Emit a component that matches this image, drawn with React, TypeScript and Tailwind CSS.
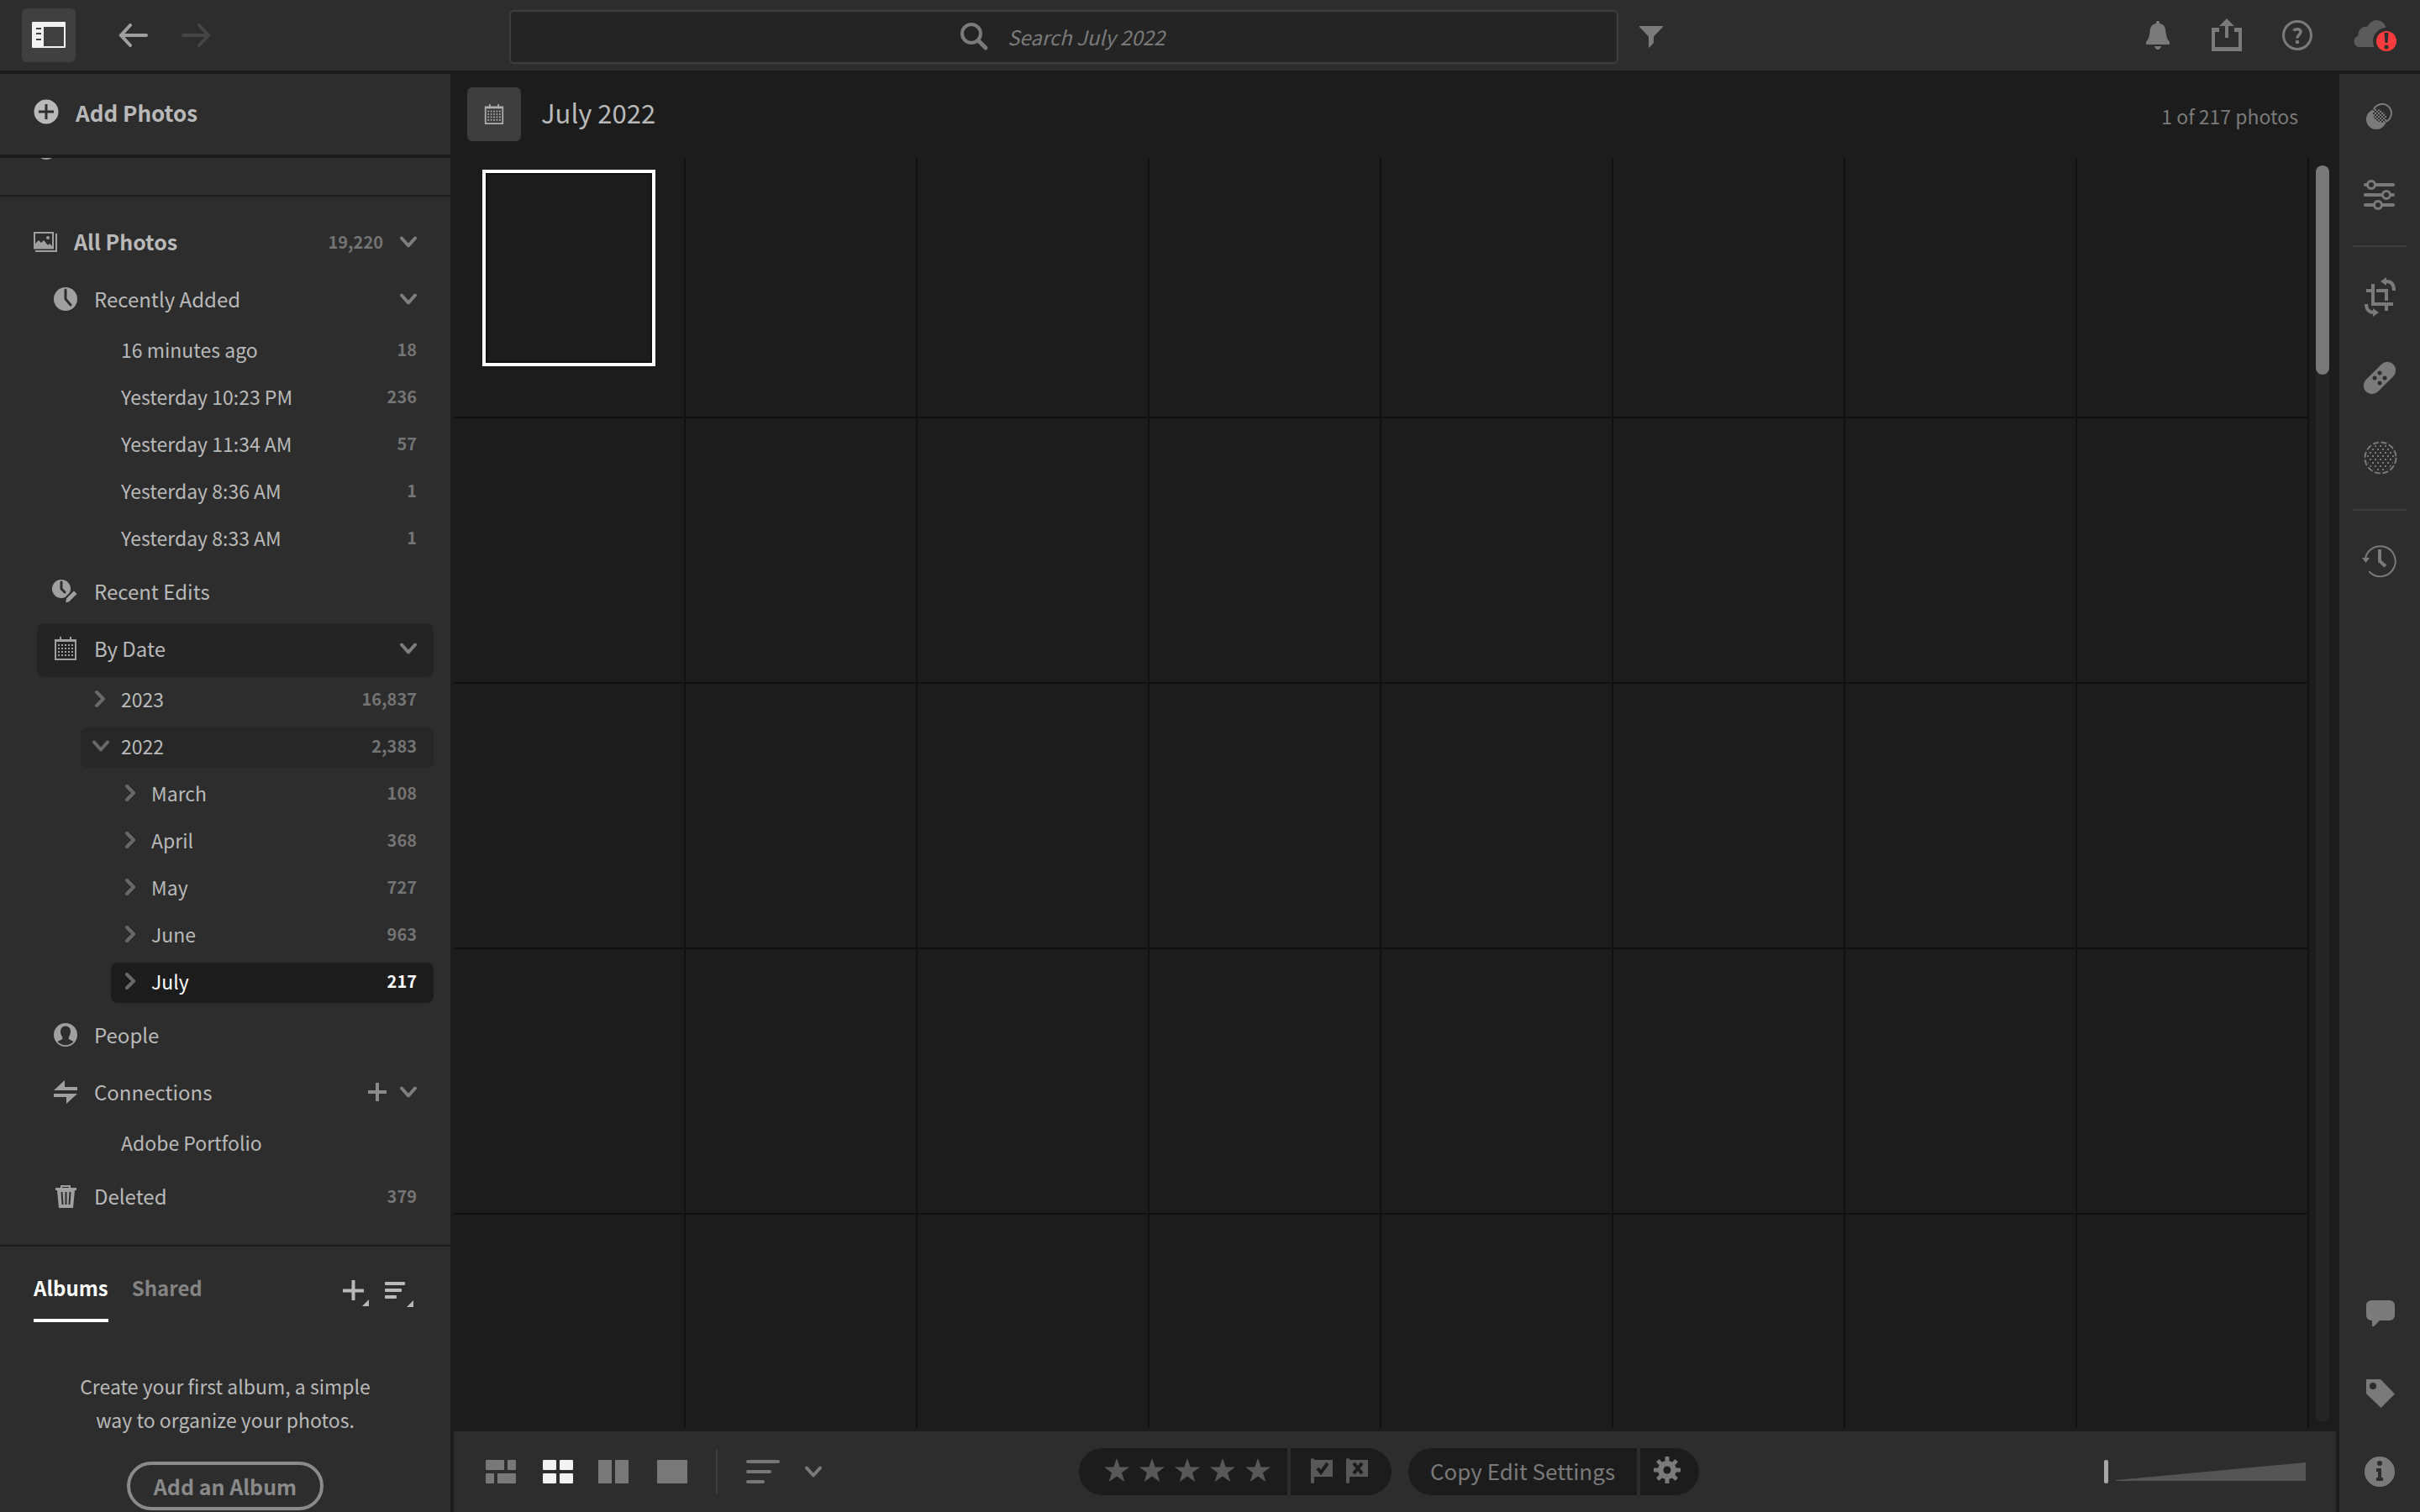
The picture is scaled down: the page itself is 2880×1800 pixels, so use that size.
import { useState } from "react";
import type { ReactNode } from "react";
import clsx from "clsx";

type IconProps = { w: number; h: number; className?: string; children: ReactNode };

function Icon({ w, h, className, children }: IconProps) {
  return (
    <svg
      width={w}
      height={h}
      viewBox={`0 0 ${w} ${h}`}
      fill="currentColor"
      aria-hidden="true"
      className={clsx("shrink-0", className)}
    >
      {children}
    </svg>
  );
}

function ChevronDown({ className }: { className?: string }) {
  return (
    <Icon w={20} h={14} className={className}>
      <path
        d="M2 2.5l8 9 8-9"
        fill="none"
        stroke="currentColor"
        strokeWidth="4"
        strokeLinecap="round"
        strokeLinejoin="round"
      />
    </Icon>
  );
}

function ChevronRight() {
  return (
    <Icon w={14} h={20}>
      <path
        d="M3 2l8 8-8 8"
        fill="none"
        stroke="currentColor"
        strokeWidth="4"
        strokeLinecap="round"
        strokeLinejoin="round"
      />
    </Icon>
  );
}

function CalendarIcon({ size }: { size: 24 | 28 }) {
  return (
    <svg width={size} height={size} viewBox="0 0 28 28" fill="currentColor" aria-hidden="true" className="shrink-0">
      <path d="M1 3h26v25H1zM3 6v20h22V6z" fillRule="evenodd" />
      <path d="M7 0h2v6H7zM19 0h2v6h-2z" />
      {[10, 14, 18, 22].map((y) =>
        [5, 9, 13, 17, 21].map((x) => <rect key={`${x}-${y}`} x={x} y={y - 1} width="2" height="2" />)
      )}
    </svg>
  );
}

function ClockIcon() {
  return (
    <Icon w={28} h={28}>
      <circle cx="14" cy="14" r="14" />
      <path d="M14 3v11l6 7" fill="none" stroke="#2d2d2d" strokeWidth="3" strokeLinecap="round" />
    </Icon>
  );
}

function EditsIcon() {
  return (
    <Icon w={30} h={28} className="-ml-0.5">
      <circle cx="11" cy="11" r="11" />
      <path d="M11 3v8l4 4" fill="none" stroke="#2d2d2d" strokeWidth="3" strokeLinecap="round" />
      <path
        d="M26 12l5 5-10 10-6 2 1-7z"
        stroke="#2d2d2d"
        strokeWidth="2"
        strokeLinejoin="round"
      />
    </Icon>
  );
}

function PhotosIcon() {
  return (
    <Icon w={28} h={24}>
      <path d="M0 0h24v20.500H0zM2 2v16h20V2z" fillRule="evenodd" />
      <path d="M2 19v-5l4-4 3 3 3-3 5 6 2-2 3 3v2z" />
      <circle cx="17" cy="7" r="2" />
      <path d="M26 2h2v22H2v-2h24z" />
    </Icon>
  );
}

function PersonIcon() {
  return (
    <Icon w={28} h={28}>
      <circle cx="14" cy="14" r="14" />
      <path
        d="M14 3.500c4 0 6 3 6 6.500 0 3-1.200 4.800-2.200 6.500v2.500l5.700 3c-2.500 2.700-5.500 4.200-9.500 4.200s-7-1.500-9.500-4.200l5.700-3v-2.500C9.200 14.800 8 13 8 10c0-3.500 2-6.500 6-6.500z"
        fill="#2d2d2d"
      />
    </Icon>
  );
}

function ConnectionsIcon() {
  return (
    <Icon w={28} h={28}>
      <path d="M0 12L13 0v8h15v4zM28 16L15 28v-8H0v-4z" />
    </Icon>
  );
}

function TrashIcon() {
  return (
    <Icon w={28} h={28}>
      <path d="M8 1h12v4h-2V3h-8v2H8z" />
      <path d="M2 4h25v3h-2l-2 21H6L4 7H2z" />
      <path d="M9.500 9l1 15M14.500 9v15M19.500 9l-1 15" stroke="#2d2d2d" strokeWidth="2" />
    </Icon>
  );
}

function PlusIcon() {
  return (
    <Icon w={22} h={22}>
      <path d="M9 0h4v9h9v4h-9v9H9v-9H0V9h9z" />
    </Icon>
  );
}

function StarIcon() {
  return (
    <Icon w={30} h={28}>
      <path d="M15 0l3.700 10.500H30l-9 6.700L24.300 28 15 21.500 5.700 28 9 17.200 0 10.500h11.300z" />
    </Icon>
  );
}

function FlagIcon({ rejected }: { rejected?: boolean }) {
  return (
    <Icon w={26} h={30}>
      <path d="M0 1.500a2 1.500 0 014 0V2h22v20H4v6.500a2 1.500 0 01-4 0z" />
      <path
        d={rejected ? "M9 6l10 12M19 6L9 18" : "M8 12l4 5 8-11"}
        fill="none"
        stroke="#1c1c1c"
        strokeWidth="4"
      />
    </Icon>
  );
}

function GearIcon() {
  return (
    <Icon w={32} h={32}>
      {[0, 45, 90, 135].map((deg) => (
        <rect key={deg} x="13.500" y="0" width="5" height="32" rx="1" transform={`rotate(${deg} 16 16)`} />
      ))}
      <circle cx="16" cy="16" r="11" />
      <circle cx="16" cy="16" r="4.500" fill="#1c1c1c" />
    </Icon>
  );
}

const recentlyAdded = [
  { label: "16 minutes ago", count: "18" },
  { label: "Yesterday 10:23 PM", count: "236" },
  { label: "Yesterday 11:34 AM", count: "57" },
  { label: "Yesterday 8:36 AM", count: "1" },
  { label: "Yesterday 8:33 AM", count: "1" },
];

const months = [
  { label: "March", count: "108" },
  { label: "April", count: "368" },
  { label: "May", count: "727" },
  { label: "June", count: "963" },
  { label: "July", count: "217" },
];

function Count({ children, selected }: { children: ReactNode; selected?: boolean }) {
  return (
    <span className={clsx("ml-auto text-xl font-bold", selected ? "text-white" : "text-[#747474]")}>
      {children}
    </span>
  );
}

type SectionProps = {
  icon: ReactNode;
  label: string;
  count?: string;
  open?: boolean;
  active?: boolean;
  action?: ReactNode;
};

function SectionRow({ icon, label, count, open, active, action }: SectionProps) {
  return (
    <div
      className={clsx(
        "ml-11 mr-5 flex h-16 items-center rounded-lg pb-1 pr-5",
        active && "bg-[#242424]"
      )}
    >
      <button type="button" className="flex flex-1 items-center text-left text-2xl text-[#b9b9b9]">
        <span className="flex w-[68px] justify-start pl-5 text-[#a0a0a0]">{icon}</span>
        {label}
      </button>
      {action}
      {count && <Count>{count}</Count>}
      {open && (
        <button type="button" aria-label={`Collapse ${label}`} className="ml-4 text-[#7e7e7e]">
          <ChevronDown />
        </button>
      )}
    </div>
  );
}

function SubRow({ label, count }: { label: string; count?: string }) {
  return (
    <button type="button" className="ml-24 mr-5 flex h-12 items-center rounded-lg pb-1 pl-12 pr-5">
      <span>{label}</span>
      {count && <Count>{count}</Count>}
    </button>
  );
}

function Sidebar() {
  const [month, setMonth] = useState("July");

  return (
    <aside className="flex w-[536px] shrink-0 flex-col overflow-hidden bg-[#2d2d2d]">
      <div className="flex h-24 shrink-0 items-center pb-1.5">
        <button type="button" className="flex items-center gap-5 pl-10 text-[26px] font-bold text-[#b9b9b9]">
          <Icon w={30} h={30}>
            <circle cx="15" cy="15" r="14.500" />
            <path d="M15 6v18M6 15h18" stroke="#2d2d2d" strokeWidth="3" />
          </Icon>
          Add Photos
        </button>
      </div>

      {/* bottom edge of the scrolled-away item */}
      <div className="h-[50px] shrink-0 border-y-2 border-t-4 border-[#1c1c1c] pl-12 text-[#a0a0a0]">
        <Icon w={14} h={2}>
          <path d="M0 0h14q-7 4-14 0z" />
        </Icon>
      </div>

      <nav className="flex flex-col gap-1 py-6 text-[23px] text-[#b9b9b9]">
        <div className="mr-5 flex h-16 items-center pb-1 pl-10 pr-5">
          <button type="button" className="flex flex-1 items-center gap-5 text-left text-[25px] font-bold">
            <span className="text-[#a0a0a0]">
              <PhotosIcon />
            </span>
            All Photos
          </button>
          <Count>19,220</Count>
          <button type="button" aria-label="Collapse All Photos" className="ml-5 text-[#7e7e7e]">
            <ChevronDown />
          </button>
        </div>

        <SectionRow icon={<ClockIcon />} label="Recently Added" open />
        <div className="flex flex-col gap-2 pb-1">
          {recentlyAdded.map((item) => (
            <SubRow key={item.label} {...item} />
          ))}
        </div>

        <SectionRow icon={<EditsIcon />} label="Recent Edits" />

        <SectionRow icon={<CalendarIcon size={28} />} label="By Date" open active />
        <div className="flex flex-col gap-2 pb-1">
          <button type="button" className="ml-24 mr-5 flex h-12 items-center rounded-lg pb-1 pl-4 pr-5">
            <span className="w-8 text-[#686868]">
              <ChevronRight />
            </span>
            <span>2023</span>
            <Count>16,837</Count>
          </button>
          <button type="button" className="ml-24 mr-5 flex h-12 items-center rounded-lg bg-[#272727] pb-1 pl-[14px] pr-5">
            <span className="w-[34px] text-[#686868]">
              <ChevronDown />
            </span>
            <span>2022</span>
            <Count>2,383</Count>
          </button>
          {months.map(({ label, count }) => (
            <button
              key={label}
              type="button"
              onClick={() => setMonth(label)}
              className={clsx(
                "ml-[132px] mr-5 flex h-12 items-center rounded-lg pb-1 pl-4 pr-5",
                month === label && "bg-[#1c1c1c] text-white"
              )}
            >
              <span className="w-8 text-[#686868]">
                <ChevronRight />
              </span>
              <span>{label}</span>
              <Count selected={month === label}>{count}</Count>
            </button>
          ))}
        </div>

        <SectionRow icon={<PersonIcon />} label="People" />
        <SectionRow
          icon={<ConnectionsIcon />}
          label="Connections"
          open
          action={
            <button type="button" aria-label="Add connection" className="text-[#8a8a8a]">
              <PlusIcon />
            </button>
          }
        />
        <div className="flex flex-col pb-1">
          <SubRow label="Adobe Portfolio" />
        </div>
        <SectionRow icon={<TrashIcon />} label="Deleted" count="379" />
      </nav>

      <section className="border-t-2 border-[#1c1c1c]">
        <div className="flex items-start pl-10 pr-[42px]">
          <div role="tablist" className="flex gap-7 text-[24px] leading-[38px] font-bold">
            <button type="button" role="tab" aria-selected="true" className="border-b-4 border-white pt-[30px] pb-[18px] text-white">
              Albums
            </button>
            <button type="button" role="tab" aria-selected="false" className="border-b-4 border-transparent pt-[30px] pb-[18px] text-[#848484]">
              Shared
            </button>
          </div>
          <div className="ml-auto flex gap-[18px] pt-10 text-[#b9b9b9]">
            <button type="button" aria-label="Create album">
              <Icon w={32} h={32}>
                <path d="M10.500 0h4v10.500H25v4H14.500V24h-4v-9.500H0v-4h10.500z" />
                <path d="M31 23v8h-8z" />
              </Icon>
            </button>
            <button type="button" aria-label="Sort albums">
              <Icon w={36} h={32}>
                <rect y="2" width="24" height="4" rx="1" />
                <rect y="10" width="20" height="4" rx="1" />
                <rect y="18" width="14" height="4" rx="1" />
                <path d="M34 24v8h-8z" />
              </Icon>
            </button>
          </div>
        </div>
        <div className="flex flex-col items-center pt-14">
          <p className="w-[380px] text-center text-[23px] leading-10 text-[#b9b9b9]">
            Create your first album, a simple way to organize your photos.
          </p>
          <button
            type="button"
            className="mt-[30px] h-[58px] rounded-full border-4 border-[#8a8a8a] px-7 text-[25px] leading-[46px] font-bold text-[#8a8a8a]"
          >
            Add an Album
          </button>
        </div>
      </section>
    </aside>
  );
}

function TopBar() {
  return (
    <header className="grid h-[84px] shrink-0 grid-cols-[606px_1fr_954px] items-center bg-[#2d2d2d]">
      <div className="flex items-center pl-[26px]">
        <button
          type="button"
          aria-label="Toggle sidebar"
          className="flex size-16 items-center justify-center rounded-md bg-[#404040] text-[#f2f2f2]"
        >
          <Icon w={40} h={32}>
            <path
              d="M1 0h38a1 1 0 011 1v29a1 1 0 01-1 1H1a1 1 0 01-1-1V1a1 1 0 011-1zM14 6v23h24V6z"
              fillRule="evenodd"
            />
            <path d="M5 7h6v2H5zM5 13h6v2H5zM5 20h6v2H5z" fill="#404040" />
          </Icon>
        </button>
        <button type="button" aria-label="Back" className="ml-[51px] text-[#a0a0a0]">
          <Icon w={35} h={28}>
            <path d="M33 14H3M14 2L3 14l11 12" fill="none" stroke="currentColor" strokeWidth="4" strokeLinecap="round" />
          </Icon>
        </button>
        <button type="button" aria-label="Forward" disabled className="ml-10 text-[#454545]">
          <Icon w={35} h={28}>
            <path d="M2 14h30M21 2l11 12-11 12" fill="none" stroke="currentColor" strokeWidth="4" strokeLinecap="round" />
          </Icon>
        </button>
      </div>

      <label className="mt-1 flex h-16 items-center justify-center gap-[22px] rounded-md border-2 border-[#3e3e3e] bg-[#242424] text-[#7a7a7a]">
        <Icon w={34} h={34}>
          <circle cx="13" cy="13" r="11" fill="none" stroke="currentColor" strokeWidth="4" />
          <path d="M21 21l9 9" stroke="currentColor" strokeWidth="5" strokeLinecap="round" />
        </Icon>
        <input
          type="text"
          aria-label="Search"
          placeholder="Search July 2022"
          className="w-[190px] bg-transparent text-2xl italic outline-none placeholder:text-[#7a7a7a]"
        />
      </label>

      <div className="flex items-center pl-[25px] pr-7 text-[#7a7a7a]">
        <button type="button" aria-label="Filter" className="mr-auto">
          <Icon w={28} h={30}>
            <path d="M0 4h28v1L17 16.500V24l-5 5.500h-1v-13L0 5z" />
          </Icon>
        </button>
        <button type="button" aria-label="Notifications">
          <Icon w={28} h={36}>
            <path d="M12 4V2q0-1 2-1t2 1v2c6 1 7 5 7.500 10s1.500 9 4.500 12v3H0v-3c3-3 4-7 4.500-12S6 5 12 4z" />
            <path d="M10 31h8q-1 4-4 4t-4-4z" />
          </Icon>
        </button>
        <button type="button" aria-label="Share" className="ml-[50px]">
          <Icon w={36} h={40}>
            <path d="M9 12v4H4v18h28V16h-5v-5h9v28H0V11h9z" />
            <path d="M18 0l9 9h-7v14h-4V9H9z" />
          </Icon>
        </button>
        <button type="button" aria-label="Help" className="ml-12">
          <Icon w={36} h={36}>
            <circle cx="18" cy="18" r="16.500" fill="none" stroke="currentColor" strokeWidth="3" />
            <path
              d="M13.500 12.500c2-2.500 8.500-2.800 8.500 1.500 0 3-4 3.500-4 7.500"
              fill="none"
              stroke="currentColor"
              strokeWidth="3.500"
            />
            <circle cx="18" cy="26" r="2.300" />
          </Icon>
        </button>
        <button type="button" aria-label="Cloud sync error" className="ml-12">
          <Icon w={52} h={40} className="text-[#5b5b5b]">
            <path d="M7 34a7 7 0 01-.5-13.500C6 14 11 9 17 10 20 5 24 2 28 2c6 0 11 4 11.500 10v22z" />
            <circle cx="40" cy="27" r="16" fill="#2d2d2d" />
            <circle cx="40" cy="27" r="12" fill="#f93b3d" />
            <path d="M37.500 17h5l-1 12h-3z" fill="#2d2d2d" />
            <circle cx="40" cy="34" r="2.500" fill="#2d2d2d" />
          </Icon>
        </button>
      </div>
    </header>
  );
}

const TOTAL_CELLS = 40;

function PhotoGrid() {
  return (
    <div className="flex min-h-0 flex-1">
      <div className="grid flex-1 grid-cols-8 grid-rows-[310px_316px_316px_316px_1fr] overflow-hidden">
        {Array.from({ length: TOTAL_CELLS }, (_, i) => (
          <div
            key={i}
            className={clsx("border-r-2 border-[#111111]", i < TOTAL_CELLS - 8 && "border-b-2")}
          >
            {i === 0 && (
              <button type="button" aria-label="Photo 1" className="mx-auto mt-[14px] block h-[234px] w-[206px] border-4 border-white">
                <span className="block h-full border-2 border-[#111111]" />
              </button>
            )}
          </div>
        ))}
      </div>
      <div className="ml-2 mr-3 mt-[9px] mb-2 w-4 rounded-full bg-[#242424]">
        <div className="h-[249px] rounded-full bg-[#787878]" />
      </div>
    </div>
  );
}

function BottomBar() {
  const [size, setSize] = useState(0);
  const [rating, setRating] = useState(0);

  return (
    <footer className="mr-1 mt-1 grid h-24 shrink-0 grid-cols-[1fr_auto_1fr] items-center bg-[#2d2d2d] pr-[14px]">
      <div className="flex items-center pl-[38px] text-[#787878]">
        <button type="button" aria-label="Photo grid">
          <Icon w={36} h={28}>
            <rect width="22" height="12" rx="1" />
            <rect x="26" width="10" height="12" rx="1" />
            <rect y="16" width="10" height="12" rx="1" />
            <rect x="14" y="16" width="22" height="12" rx="1" />
          </Icon>
        </button>
        <button type="button" aria-label="Square grid" className="ml-8 text-[#f4f4f4]">
          <Icon w={36} h={28}>
            <rect width="16" height="12" rx="1" />
            <rect x="20" width="16" height="12" rx="1" />
            <rect y="16" width="16" height="12" rx="1" />
            <rect x="20" y="16" width="16" height="12" rx="1" />
          </Icon>
        </button>
        <button type="button" aria-label="Compare" className="ml-[30px]">
          <Icon w={36} h={28}>
            <rect width="16" height="28" rx="1" />
            <rect x="20" width="16" height="28" rx="1" />
          </Icon>
        </button>
        <button type="button" aria-label="Detail" className="ml-[34px]">
          <Icon w={36} h={28}>
            <rect width="36" height="28" rx="1" />
          </Icon>
        </button>
        <div className="mx-[34px] h-[52px] w-0.5 bg-[#3e3e3e]" />
        <button type="button" aria-label="Sort order" className="flex items-center gap-[30px]">
          <Icon w={40} h={28}>
            <rect width="40" height="4" rx="2" />
            <rect y="12" width="30" height="4" rx="2" />
            <rect y="24" width="22" height="4" rx="2" />
          </Icon>
          <ChevronDown />
        </button>
      </div>

      <div className="flex h-14 text-[#585858]">
        <div className="flex w-[248px] items-center justify-end gap-3 rounded-l-full bg-[#1c1c1c] pb-1 pr-5">
          {[1, 2, 3, 4, 5].map((n) => (
            <button
              key={n}
              type="button"
              aria-label={`Rate ${n}`}
              onClick={() => setRating(n)}
              className={clsx(n <= rating && "text-[#f4f4f4]")}
            >
              <StarIcon />
            </button>
          ))}
        </div>
        <div className="ml-1 flex w-[120px] items-center gap-4 rounded-r-full bg-[#1c1c1c] pb-0.5 pl-6">
          <button type="button" aria-label="Pick">
            <FlagIcon />
          </button>
          <button type="button" aria-label="Reject">
            <FlagIcon rejected />
          </button>
        </div>
        <button
          type="button"
          className="ml-5 w-[272px] rounded-l-full bg-[#1c1c1c] pb-1 text-[26px] text-[#7a7a7a]"
        >
          Copy Edit Settings
        </button>
        <button
          type="button"
          aria-label="Edit settings options"
          className="ml-1 w-[70px] rounded-r-full bg-[#1c1c1c] pb-1 pl-4 text-[#7a7a7a]"
        >
          <GearIcon />
        </button>
      </div>

      <div className="relative mr-[22px] h-7 w-60 justify-self-end">
        <svg className="absolute inset-y-0 right-0 text-[#545454]" width="226" height="28" fill="currentColor" aria-hidden="true">
          <path d="M0 24L226 3v22H0z" />
        </svg>
        <input
          type="range"
          min={0}
          max={100}
          value={size}
          onChange={(e) => setSize(Number(e.target.value))}
          aria-label="Thumbnail size"
          className="relative block h-7 w-full cursor-pointer appearance-none bg-transparent [&::-webkit-slider-thumb]:h-7 [&::-webkit-slider-thumb]:w-[5px] [&::-webkit-slider-thumb]:appearance-none [&::-webkit-slider-thumb]:rounded-xs [&::-webkit-slider-thumb]:bg-[#a6a6a6]"
        />
      </div>
    </footer>
  );
}

function RailButton({ label, children }: { label: string; children: ReactNode }) {
  return (
    <button type="button" aria-label={label} className="flex size-24 shrink-0 items-center justify-center">
      <Icon w={48} h={48}>{children}</Icon>
    </button>
  );
}

function ToolRail() {
  return (
    <aside className="flex w-24 shrink-0 flex-col bg-[#2d2d2d] text-[#7a7a7a]">
      <RailButton label="Presets">
        <defs>
          <pattern id="checker" width="4" height="4" patternUnits="userSpaceOnUse">
            <rect width="4" height="4" fill="#2d2d2d" />
            <rect width="2" height="2" fill="#7a7a7a" />
            <rect x="2" y="2" width="2" height="2" fill="#7a7a7a" />
          </pattern>
          <clipPath id="overlap">
            <circle cx="28" cy="22" r="12" />
          </clipPath>
        </defs>
        <circle cx="20" cy="30" r="12" />
        <circle cx="20" cy="30" r="12" fill="url(#checker)" clipPath="url(#overlap)" />
        <path d="M17 18A11 11 0 1 1 31 33" fill="none" stroke="currentColor" strokeWidth="2" />
      </RailButton>
      <RailButton label="Edit">
        <path
          d="M7 12h6M19 12h21M7 24h20M34 24h6M7 36h9M25 36h15"
          stroke="currentColor"
          strokeWidth="4"
          strokeLinecap="round"
        />
        <g fill="#2d2d2d" stroke="currentColor" strokeWidth="3">
          <circle cx="14" cy="12" r="4.500" />
          <circle cx="32" cy="24" r="4.500" />
          <circle cx="22" cy="36" r="4.500" />
        </g>
      </RailButton>
      <hr className="mx-4 my-3 h-0.5 border-0 bg-[#3e3e3e]" />
      <RailButton label="Crop and rotate">
        <path d="M8 14h6V8h4v22h22v4h-6v6h-4v-6H14V18H8z" />
        <path d="M20 14h14v14h-4V18H20z" />
        <path d="M32 5c6 0 9 4 9 11M8 32c0 7 4 10 9 10" fill="none" stroke="currentColor" strokeWidth="4" />
        <path d="M25 5l7-5v10zM23 42l-7 5V37z" />
      </RailButton>
      <RailButton label="Healing">
        <rect x="1" y="14" width="46" height="20" rx="10" transform="rotate(-45 24 24)" />
        <g fill="#2d2d2d">
          <circle cx="24" cy="18" r="2.500" />
          <circle cx="18" cy="24" r="2.500" />
          <circle cx="30" cy="24" r="2.500" />
          <circle cx="24" cy="30" r="2.500" />
        </g>
      </RailButton>
      <RailButton label="Masking">
        <defs>
          <pattern id="dots" width="6" height="8" patternUnits="userSpaceOnUse">
            <rect width="2" height="2" fill="#7a7a7a" />
            <rect x="3" y="4" width="2" height="2" fill="#7a7a7a" />
          </pattern>
        </defs>
        <circle cx="25" cy="23" r="16" fill="url(#dots)" />
        <circle
          cx="25"
          cy="23"
          r="18.500"
          fill="none"
          stroke="currentColor"
          strokeWidth="2"
          strokeDasharray="7 2.680"
        />
      </RailButton>
      <hr className="mx-4 my-3 h-0.5 border-0 bg-[#3e3e3e]" />
      <RailButton label="Versions">
        <path
          d="M7 21A18 18 0 1 1 12 37"
          fill="none"
          stroke="currentColor"
          strokeWidth="2"
          strokeLinecap="round"
        />
        <path d="M3 20h9l-4.500 6z" />
        <path d="M24 10v14l7 6" fill="none" stroke="currentColor" strokeWidth="4" />
      </RailButton>

      <div className="mt-auto flex flex-col">
        <RailButton label="Comments">
          <path d="M14 12h22a6 6 0 016 6v12a6 6 0 01-6 6H24l-7 7h-2v-7h-1a6 6 0 01-6-6V18a6 6 0 016-6z" />
        </RailButton>
        <RailButton label="Keywords">
          <path d="M8 10h17l17 17.500L25.500 44 8 27z" />
          <circle cx="16" cy="18" r="4" fill="#2d2d2d" />
        </RailButton>
        <RailButton label="Info">
          <circle cx="24" cy="24" r="18" />
          <g fill="#2d2d2d">
            <circle cx="24" cy="14" r="3" />
            <path d="M20 20h6v11h2v4h-8v-4h2v-7h-2z" />
          </g>
        </RailButton>
      </div>
    </aside>
  );
}

export default function App() {
  return (
    <div className="flex h-screen flex-col overflow-hidden bg-[#1c1c1c] font-['Noto_Sans_CJK_SC','Noto_Sans',sans-serif]">
      <TopBar />
      <div className="mt-1 flex min-h-0 flex-1">
        <Sidebar />
        <div className="ml-1 flex min-w-0 flex-1 flex-col">
          <div className="flex h-[100px] shrink-0 items-center pb-1 pl-4 pr-[49px]">
            <button
              type="button"
              aria-label="Date"
              className="flex size-16 items-center justify-center rounded-md bg-[#3e3e3e] text-[#b0b0b0]"
            >
              <CalendarIcon size={24} />
            </button>
            <h1 className="ml-6 pb-1 text-[31px] text-[#b9b9b9]">July 2022</h1>
            <span className="ml-auto pt-1 text-[23px] text-[#7a7a7a]">1 of 217 photos</span>
          </div>
          <main className="flex min-h-0 flex-1 flex-col">
            <PhotoGrid />
          </main>
          <BottomBar />
        </div>
        <ToolRail />
      </div>
    </div>
  );
}
